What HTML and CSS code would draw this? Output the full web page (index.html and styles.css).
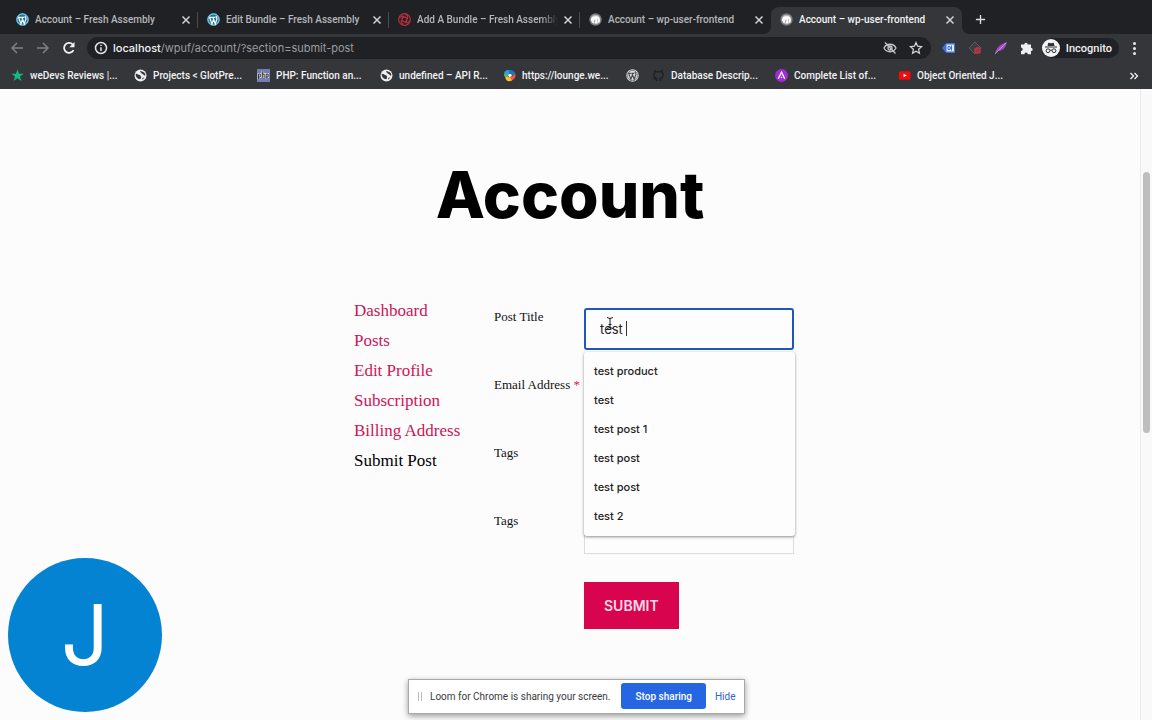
FILE: index.html
```html
<!DOCTYPE html>
<html lang="en">
<head>
<meta charset="utf-8">
<title>Account – wp-user-frontend</title>
<link rel="stylesheet" href="styles.css">
</head>
<body>
<svg class="defs" width="0" height="0" aria-hidden="true">
  <symbol id="wp" viewBox="0 0 24 24">
    <circle cx="12" cy="12" r="12" fill="currentColor"/>
    <circle cx="12" cy="12" r="10.3" fill="none" stroke="#fff" stroke-width="1.3"/>
    <path d="M3.5 8h5.5M9.5 8h6M4.800 8.200l4.400 11.800 3-8.500M11 8.200l4.300 11.800 3-9c.8-2.500-1.800-3.300-1.300-5.500" fill="none" stroke="#fff" stroke-width="2.200"/>
  </symbol>
  <symbol id="mamp" viewBox="0 0 24 24">
    <circle cx="12" cy="12" r="11.500" fill="#77797c"/>
    <circle cx="12" cy="12" r="9" fill="#b5b7b9"/>
    <path d="M4 15c-1-5 2-9 7-9 6-1 10 3 9 9l-1 3h-3v-4l-1-1v6h-4v-5l-2-1v5H6v-4z" fill="#fff"/>
    <path d="M11 12v4M16 11v3" stroke="#777" stroke-width="1"/>
  </symbol>
  <symbol id="globe" viewBox="0 0 24 24">
    <circle cx="12" cy="12" r="11" fill="#eceded"/>
    <path d="M3 9c3-1 4 2 7 2 2 0 2 2 3 3s0 4-2 5c-5-1-8-5-8-10zM11 4c0 3 3 2 3 4s3 1 4 3 2 1 3 0c0-4-4-7-10-7zM15 17l4-2-3 5z" fill="#35363a"/>
  </symbol>
  <symbol id="x" viewBox="0 0 12 12"><path d="M2.500 2.500l7 7M9.500 2.500l-7 7" fill="none" stroke="currentColor" stroke-width="1.500"/></symbol>
</svg>

<header class="browser">
  <nav class="tabs" aria-label="Tabs">
    <div class="tab"><svg class="fav wpblue"><use href="#wp"/></svg><span class="name">Account – Fresh Assembly</span><button class="close" aria-label="Close tab"><svg><use href="#x"/></svg></button></div>
    <div class="tab"><svg class="fav wpblue"><use href="#wp"/></svg><span class="name">Edit Bundle – Fresh Assembly</span><button class="close" aria-label="Close tab"><svg><use href="#x"/></svg></button></div>
    <div class="tab"><svg class="fav" viewBox="0 0 24 24" fill="none" stroke="#c3303f" stroke-width="2"><circle cx="12" cy="12" r="10.800"/><path d="M12 8c-3-4-8-2-9 2M16 12c4-3 2-8-2-9M12 16c3 4 8 2 9-2M8 12c-4 3-2 8 2 9M8 12c0-5 5-6 8-3M12 16c-5 0-6-5-3-8M16 12c0 5-5 6-8 3M12 8c5 0 6 5 3 8"/></svg><span class="name faded">Add A Bundle – Fresh Assembly</span><button class="close" aria-label="Close tab"><svg><use href="#x"/></svg></button></div>
    <div class="tab last"><svg class="fav"><use href="#mamp"/></svg><span class="name">Account – wp-user-frontend</span><button class="close" aria-label="Close tab"><svg><use href="#x"/></svg></button></div>
    <div class="tab active"><svg class="fav"><use href="#mamp"/></svg><span class="name">Account – wp-user-frontend</span><button class="close" aria-label="Close tab"><svg><use href="#x"/></svg></button></div>
    <button class="new" aria-label="New tab"><svg viewBox="0 0 12 12"><path d="M6 1v10M1 6h10" stroke="currentColor" stroke-width="1.500"/></svg></button>
  </nav>

  <div class="toolbar">
    <div class="moves">
      <button class="move dim" aria-label="Back"><svg viewBox="0 0 14 14"><path d="M13 7H2M7 2L2 7l5 5"/></svg></button>
      <button class="move dim" aria-label="Forward"><svg viewBox="0 0 14 14"><path d="M1 7h11M7 2l5 5-5 5"/></svg></button>
      <button class="move" aria-label="Reload"><svg viewBox="0 0 14 14"><path d="M11.500 9.200A5 5 0 1 1 10.800 3.500" stroke-width="1.800"/><path d="M12.500 1v5.200H7.300z" fill="currentColor" stroke="none"/></svg></button>
    </div>
    <div class="address">
      <svg class="info" viewBox="0 0 14 14"><circle cx="7" cy="7" r="5.500"/><path d="M7 6.300V10M7 3.700v1.400"/></svg>
      <a class="url" href="#"><b>localhost</b>/wpuf/account/?section=submit-post</a>
      <button class="plain" aria-label="Third-party cookies blocked"><svg viewBox="0 0 14 14" fill="none" stroke="#c4c7ca" stroke-width="1.300"><path d="M1 7c2.500-5 9.500-5 12 0-2.500 5-9.500 5-12 0z"/><circle cx="7" cy="7" r="2"/><path d="M2 1.500l10.500 11"/></svg></button>
      <button class="plain" aria-label="Bookmark this page"><svg viewBox="0 0 14 14" fill="none" stroke="#d5d7da" stroke-width="1.200"><path d="M7 1.500l1.600 3.700 4 .4-3 2.700.9 4L7 10.200l-3.500 2.100.9-4-3-2.700 4-.4z"/></svg></button>
    </div>
    <div class="extensions">
      <button class="plain" aria-label="Tag extension"><svg viewBox="0 0 14 14"><path d="M0 7l4-5h9v10H4z" fill="#3d6fd8"/><rect x="4.500" y="3.500" width="7.500" height="7" fill="#e4ecfb"/><path d="M6 5.500h2v3H6zM9.500 4.500v5M8 7h2" fill="none" stroke="#3d6fd8"/></svg></button>
      <button class="plain" aria-label="Blocker extension"><svg viewBox="0 0 14 14"><path d="M7 1l6 6-6 6-6-6z" fill="#3c3d40" stroke="#5b5c60" stroke-linejoin="round"/><circle cx="9.500" cy="9.500" r="3.500" fill="#b33543"/><path d="M8 11l3-3" stroke="#75303a"/></svg></button>
      <button class="plain" aria-label="Feather extension"><svg viewBox="0 0 14 14"><path d="M1 13c1-6 5-10 12-12-1 5-4 9-9 9z" fill="#a34bc0"/><path d="M1 13L12 2" stroke="#d99be8" stroke-width=".8"/></svg></button>
      <button class="plain" aria-label="Extensions"><svg viewBox="0 0 14 14"><path d="M1 3.500h3.300a1.700 1.700 0 1 1 3.400 0H11v3.200a1.700 1.700 0 1 1 0 3.400v3.100H7.800a1.700 1.700 0 0 0-3.400 0H1v-3.300a1.700 1.700 0 0 0 0-3.400z" fill="#eeeff1"/></svg></button>
    </div>
    <button class="incognito"><svg viewBox="0 0 18 18"><circle cx="9" cy="9" r="9" fill="#f1f3f4"/><path d="M5.500 7l.8-3.200 2.700.5 2.700-.5.800 3.200zM3 7.500h12v1H3z" fill="#303134"/><g fill="none" stroke="#303134"><circle cx="6" cy="11.700" r="1.900"/><circle cx="12" cy="11.700" r="1.900"/><path d="M8 11.200h2"/></g></svg>Incognito</button>
    <button class="menu" aria-label="Menu"><i></i><i></i><i></i></button>
  </div>

  <nav class="bookmarks" aria-label="Bookmarks">
    <a href="#"><svg viewBox="0 0 14 14"><path d="M7 .5l1.700 4.600h4.900L9.700 8l1.400 4.900L7 10l-4.100 2.900L4.300 8 .4 5.100h4.900z" fill="#12b981"/></svg>weDevs Reviews |...</a>
    <a href="#"><svg><use href="#globe"/></svg>Projects &lt; GlotPre...</a>
    <a href="#"><svg viewBox="0 0 14 14"><path d="M0 0h14v14H0z" fill="#777bb3"/><path d="M1.500 11V5.500h2v3.200h-2M5.700 2.500v7M5.700 5.500h2v4M9.800 11V5.500h2.200v3.200H9.800" fill="none" stroke="#fff" stroke-width="2"/><path d="M1.500 11V5.500h2v3.200h-2M5.700 2.500v7M5.700 5.500h2v4M9.800 11V5.500h2.200v3.200H9.800" fill="none" stroke="#17181c"/></svg>PHP: Function an...</a>
    <a href="#"><svg><use href="#globe"/></svg>undefined – API R...</a>
    <a href="#"><svg viewBox="0 0 14 14"><path d="M2 8C-.5 4 3 0 8 1.500L6.500 6z" fill="#24a5df"/><path d="M2 5L1 6c0 2 2 4 5 3.500L5 6z" fill="#55b65b"/><path d="M6 1.500c4-2 8 2 7 5.500L8 6.500z" fill="#1d74bd"/><path d="M13.300 5.500c1 4-3 8-7 7.500L8 8.500z" fill="#ef5939"/><path d="M9.500 12.500C5 15 2 11 2.500 8L8 9z" fill="#f8c334"/><circle cx="7.500" cy="6.800" r="1.800" fill="#fff"/></svg>https://lounge.we...</a>
    <a class="lone" href="#" aria-label="WordPress"><svg viewBox="0 0 24 24"><circle cx="12" cy="12" r="11.500" fill="#d7d8da"/><circle cx="12" cy="12" r="9.500" fill="none" stroke="#45464a"/><path d="M4 8h5M10 8h5M5 8l4 11 3-8.500M11 8l4.300 11 3-9c.5-2-2-3-1.300-4.500" fill="none" stroke="#45464a" stroke-width="2"/></svg></a>
    <a href="#"><svg viewBox="0 0 14 14"><path d="M5 13v-2c-2 .5-2.500-1-3.500-1.500M9 13v-3c3-.3 4-4 2-6V2L9 3H5L3 2v2c-2 2-1 5.700 2 6" fill="none" stroke="#222327" stroke-width="1.800"/></svg>Database Descrip...</a>
    <a href="#"><svg viewBox="0 0 14 14"><circle cx="7" cy="7" r="7" fill="#a02bdb"/><path d="M3.500 10.500L7 3.500l3.500 7M6.500 8.500l1 1" fill="none" stroke="#fff" stroke-width="1.400"/></svg>Complete List of...</a>
    <a href="#"><svg viewBox="0 0 14 14"><rect x="1" y="2.300" width="12.500" height="9.400" rx="2" fill="#f40b0b"/><path d="M6 5l3.500 2L6 9z" fill="#fff"/></svg>Object Oriented J...</a>
    <button class="more" aria-label="More bookmarks"><svg viewBox="0 0 10 10"><path d="M1.500 2l3 3-3 3M5.500 2l3 3-3 3" fill="none" stroke="#f1f3f4" stroke-width="1.300"/></svg></button>
  </nav>
</header>

<div class="window">
  <main class="page">
    <h1>Account</h1>
    <div class="account">
      <ul class="sections">
        <li><a href="#">Dashboard</a></li>
        <li><a href="#">Posts</a></li>
        <li><a href="#">Edit Profile</a></li>
        <li><a href="#">Subscription</a></li>
        <li><a href="#">Billing Address</a></li>
        <li><a class="current" href="#">Submit Post</a></li>
      </ul>
      <form class="post">
        <div class="row">
          <label for="title">Post Title</label>
          <div class="field">
            <input class="focused" id="title" type="text" value="test " autocomplete="off">
            <span class="caret"></span>
            <svg class="pointer" viewBox="0 0 8 14"><path d="M1 1.500l3 1 3-1M4 2v10M1 12.500l3-1 3 1M2.500 8.500h3" fill="none" stroke="#222"/></svg>
            <ul class="suggest">
              <li>test product</li><li>test</li><li>test post 1</li><li>test post</li><li>test post</li><li>test 2</li>
            </ul>
          </div>
        </div>
        <div class="row"><label for="email">Email Address <span class="required">*</span></label><div class="field"><input id="email" type="email"></div></div>
        <div class="row"><label for="tags">Tags</label><div class="field"><input id="tags" type="text"></div></div>
        <div class="row"><label for="tags2">Tags</label><div class="field"><input id="tags2" type="text"></div></div>
        <button class="submit" type="button">SUBMIT</button>
      </form>
    </div>
  </main>
  <div class="scroll"><div class="thumb"></div></div>
  <div class="avatar">J</div>
  <div class="sharing">
    <span class="grip"></span>
    <span class="message">Loom for Chrome is sharing your screen.</span>
    <button class="stop">Stop sharing</button>
    <a href="#">Hide</a>
  </div>
</div>
</body>
</html>
```

FILE: styles.css
```css
* { box-sizing: border-box; }
body {
  margin: 0;
  height: 100vh;
  display: flex;
  flex-direction: column;
  overflow: hidden;
  background: #fcfcfd;
  font-family: Roboto, "Liberation Sans", sans-serif;
  font-size: 10px;
}
.defs { position: absolute; }
svg { display: block; flex: none; }
button { border: 0; padding: 0; background: none; color: inherit; font: inherit; }
a { text-decoration: none; color: inherit; }
ul { list-style: none; margin: 0; padding: 0; }

/* Browser frame */
.browser { background: #35363a; color: #f1f3f4; font-weight: 500; }
.tabs {
  display: flex;
  height: 34px;
  padding: 7px 7px 0;
  background: #202124;
}
.tab {
  display: flex;
  align-items: center;
  flex: 0 1 191px;
  min-width: 0;
  padding: 0 6px 2px 9px;
  color: #b4b7bb;
  background: linear-gradient(#4a4c50, #4a4c50) right 5px / 1px 16px no-repeat;
}
.tab.last { background: none; }
.tab.active {
  position: relative;
  background: #35363a;
  border-radius: 8px 8px 0 0;
  color: #f1f3f4;
}
.tab.active::before,
.tab.active::after {
  content: "";
  position: absolute;
  bottom: 0;
  width: 8px;
  height: 8px;
}
.tab.active::before { right: 100%; background: radial-gradient(circle at 0 0, #202124 8px, #35363a 8px); }
.tab.active::after { left: 100%; background: radial-gradient(circle at 100% 0, #202124 8px, #35363a 8px); }
.fav { width: 13px; height: 13px; margin-right: 6px; }
.wpblue { color: #14779c; }
.name { flex: 1; overflow: hidden; white-space: nowrap; }
.name.faded { mask-image: linear-gradient(to right, #000 88%, transparent); }
.close svg { width: 12px; height: 12px; }
.close { margin-left: 4px; color: #d0d2d5; }
.new { margin-left: 13px; padding-bottom: 2px; color: #d8dadd; }
.new svg { width: 11px; height: 11px; }

.toolbar {
  display: flex;
  align-items: center;
  height: 28px;
  padding: 0 16px 0 10px;
}
.moves { display: flex; gap: 12px; margin-right: 11px; }
.move svg { width: 14px; height: 14px; fill: none; stroke: currentColor; stroke-width: 1.5; }
.dim { color: #7e8084; }
.address {
  display: flex;
  align-items: center;
  flex: 1;
  height: 22px;
  padding: 0 8px 0 7px;
  border-radius: 11px;
  background: #202124;
  gap: 12px;
}
.info { width: 14px; height: 14px; fill: none; stroke: #e4e6e8; stroke-width: 1.5; margin-right: -7px; }
.url { flex: 1; color: #9a9da1; font: 11px Inter, "Liberation Sans", sans-serif; }
.url b { color: #f1f3f4; font-weight: 500; }
.plain svg { width: 14px; height: 14px; }
.extensions { display: flex; gap: 12px; margin: 0 8px 0 11px; }
.incognito {
  display: flex;
  align-items: center;
  gap: 6px;
  height: 20px;
  padding-right: 7px;
  border-radius: 10px;
  background: #202124;
  font-size: 11px;
}
.incognito svg { width: 18px; height: 18px; }
.menu { display: grid; gap: 2px; margin-left: 14px; }
.menu i { width: 3px; height: 3px; border-radius: 50%; background: #e8eaed; }

.bookmarks { display: flex; align-items: center; height: 27px; padding: 0 13px 0 11px; }
.bookmarks a { display: flex; align-items: center; gap: 6px; flex: 0 1 123px; white-space: nowrap; }
.bookmarks a.lone { flex-basis: 26px; }
.bookmarks svg { width: 13px; height: 13px; }
.more { margin-left: auto; }
.bookmarks .more svg { width: 10px; height: 10px; }

/* Web page */
.window { position: relative; display: flex; flex: 1; min-height: 0; }
.page { flex: 1; padding-top: 66px; }
h1 {
  margin: 0;
  font: 800 64px/80px Inter, "Liberation Sans", sans-serif;
  text-align: center;
}
.account {
  display: flex;
  max-width: 448px;
  margin: 61px auto 0;
  padding-left: 8px;
  font-family: "Liberation Serif", serif;
}
.sections { flex: 0 0 140px; font-size: 17px; line-height: 30px; color: #cd1556; }
.current { color: #000; }
.post { flex: 1; padding-top: 12px; }
.row { display: flex; margin-bottom: 26px; }
.row label { flex: 0 0 90px; font-size: 13px; line-height: 18px; color: #111; white-space: nowrap; }
.required { color: #e0203c; }
.field { position: relative; flex: 1; min-width: 0; }
.field input {
  display: block;
  width: 100%;
  height: 42px;
  padding: 0 15px;
  border: 1px solid #dcdcde;
  background: #fdfdfe;
  font: 13px Inter, "Liberation Sans", sans-serif;
  color: #222;
  outline: 0;
}
.field input.focused { padding: 0 14px; border: 2px solid #1f58bb; border-radius: 3px; }
.caret { position: absolute; left: 42px; top: 13px; width: 1px; height: 15px; background: #333; }
.pointer { position: absolute; left: 22px; top: 8px; width: 8px; height: 14px; }
.suggest {
  position: absolute;
  z-index: 1;
  top: 44px;
  left: 0;
  right: -1px;
  padding: 5px 10px;
  border-radius: 3px;
  background: #fdfdfd;
  box-shadow: 0 1px 3px rgba(0, 0, 0, .45);
  font: 500 11px/29px Inter, "Liberation Sans", sans-serif;
  color: #222;
}
.submit {
  margin: 2px 0 0 90px;
  padding: 0 20px;
  background: #d8054e;
  color: #f9dbe5;
  font: 600 14px/47px Inter, "Liberation Sans", sans-serif;
}

.scroll {
  display: grid;
  grid-template-rows: 83fr 261fr 287fr;
  flex: 0 0 12px;
  padding: 0 2px;
  border-left: 1px solid #e9e9eb;
  background: #f9f9fa;
}
.thumb { grid-row: 2; border-radius: 4px; background: #bebebf; }

/* Screen recording overlays */
.avatar {
  position: absolute;
  left: 8px;
  bottom: 8px;
  width: 154px;
  height: 154px;
  border-radius: 50%;
  background: #0383d1;
  color: #fff;
  font: 84px/154px Inter, "Liberation Sans", sans-serif;
  text-align: center;
}
.sharing {
  position: absolute;
  left: 408px;
  bottom: 6px;
  display: flex;
  align-items: center;
  height: 35px;
  padding: 0 9px 1px;
  border: 1px solid #a9a9ab;
  background: #fff;
  box-shadow: 0 2px 6px rgba(0, 0, 0, .4);
  color: #3a3a3c;
  white-space: nowrap;
}
.grip { width: 4px; height: 9px; margin-right: 8px; border: solid #bbb; border-width: 0 1px; }
.stop {
  height: 26px;
  margin: 0 9px 0 11px;
  padding: 0 14px;
  border-radius: 3px;
  background: #2666e3;
  color: #fff;
  font-weight: 500;
}
.sharing a { color: #2f66c9; }
```
